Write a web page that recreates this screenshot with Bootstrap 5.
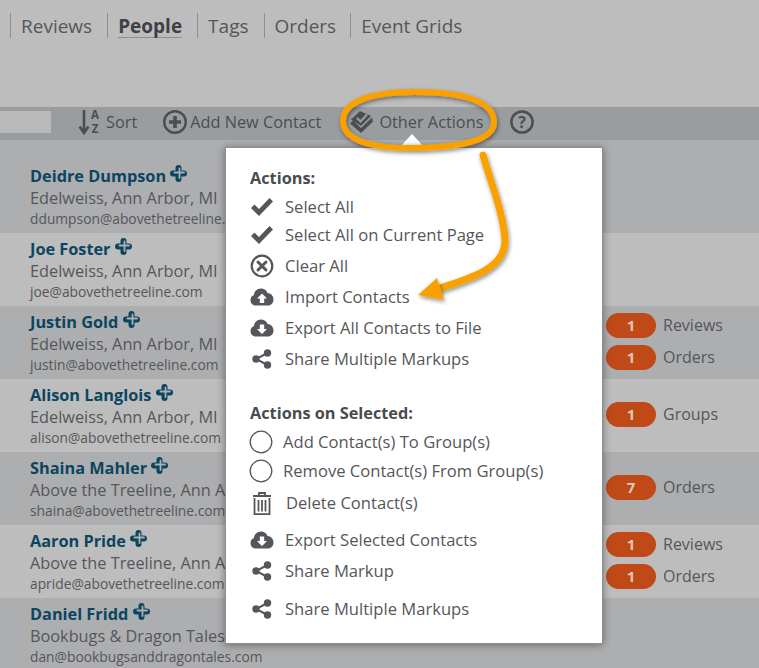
<!DOCTYPE html>
<html lang="en">
<head>
    <meta charset="UTF-8">
    <meta name="viewport" content="width=device-width, initial-scale=1.0">
    <title>People</title>
    <link href="https://cdn.jsdelivr.net/npm/bootstrap@5.3.2/dist/css/bootstrap.min.css" rel="stylesheet">
    <style>
        html, body { height: 668px; overflow: hidden; }
        body { font-family: "Open Sans", "Liberation Sans", sans-serif; background: #bdbdbd; color: #4f5052; position: relative; }
        .top-tabs { height: 107px; padding: 13px 0 0 10px; }
        .tab-link { height: 25px; border-left: 1px solid #8f8f8f; padding: 0 10px; font-size: 19px; line-height: 27px; color: #55565a; margin-right: 5px; }
        .tab-link.is-on { font-weight: 700; color: #3e4046; margin-right: 5px; }
        .tab-link.is-on span { display: inline-block; border-bottom: 1px solid #8f8f8f; line-height: 26px; height: 25px; }
        .tab-link.is-tight { margin-right: 4px; }
        .tool-bar { height: 33px; background: #9a9da0; font-size: 16.300px; color: #4c4d50; padding-bottom: 3px; }
        .search-stub { width: 51px; height: 22px; background: #b9b9b9; }
        .tool-item { line-height: 30px; }
        .tool-bar svg { display: block; }
        .lft-27 { margin-left: 27px; }
        .lft-26 { margin-left: 26px; }
        .lft-28 { margin-left: 28px; }
        .lft-3 { margin-left: 3px; }
        .lft-5 { margin-left: 5px; }
        .person-row { height: 73px; background: #bdbdbd; }
        .person-row.is-dark { background: #adaeb0; }
        .person-row.is-first { height: 93px; padding-top: 20px; }
        .who { width: 606px; padding: 4px 0 0 30px; white-space: nowrap; overflow: hidden; }
        .who-name { font-size: 16.300px; font-weight: 700; color: #0b4560; line-height: 24px; height: 24px; }
        .who-org { font-size: 16.300px; line-height: 22px; color: #55565a; margin-top: -1px; }
        .who-mail { font-size: 13.800px; line-height: 20px; color: #55565a; }
        .counts { padding-bottom: 3px; gap: 7px; }
        .count-line { height: 25px; font-size: 16px; color: #55565a; }
        .count-pill { width: 50px; height: 25px; border-radius: 13px; background: #bf4a17; color: #e0c8b8; font-weight: 700; font-size: 15px; line-height: 25px; text-align: center; margin-right: 7px; }
        .act-pop { position: absolute; left: 225px; top: 147px; width: 378px; height: 497px; background: #fff; border: 1px solid #8e8e8e; box-shadow: 0 1px 8px rgba(0,0,0,.4); padding: 19px 0 0 24px; color: #55565a; font-size: 16.600px; }
        .act-tip { position: absolute; left: 400px; top: 134px; width: 0; height: 0; border-left: 12px solid transparent; border-right: 12px solid transparent; border-bottom: 13px solid #fff; }
        .act-head { font-weight: 700; line-height: 22px; height: 22px; color: #4a4b4e; font-size: 16.300px; }
        .act-row { height: 22px; line-height: 22px; white-space: nowrap; }
        .act-ico { width: 35px; flex: none; }
        .act-ico svg { display: block; }
        .act-ico.is-ring { width: 34px; margin-left: -1px; }
        .act-ico.is-bin { width: 36px; padding-left: 3px; }
        .top-7 { margin-top: 7px; }
        .top-6 { margin-top: 6px; }
        .top-9 { margin-top: 9px; }
        .top-10 { margin-top: 10px; }
        .top-15 { margin-top: 15px; }
        .top-16 { margin-top: 16px; }
        .top-32 { margin-top: 32px; }
        .mark-up { position: absolute; left: 0; top: 0; pointer-events: none; }
    </style>
</head>
<body>
    <svg width="0" height="0" class="position-absolute">
        <defs>
            <symbol id="i-check" viewBox="0 0 24 20"><path d="M1 11 L4.500 7.500 L9 12 L19.500 1 L23 4.500 L9 19 Z" fill="currentColor"/></symbol>
            <symbol id="i-clear" viewBox="0 0 24 24"><circle cx="12" cy="12" r="10.300" fill="none" stroke="currentColor" stroke-width="2.200"/><path d="M8 8 L16 16 M16 8 L8 16" stroke="currentColor" stroke-width="3" stroke-linecap="round"/></symbol>
            <symbol id="i-up" viewBox="0 0 24 18"><path d="M6 17.500 C2.500 17.500 .5 15 .5 12 C.5 9.500 2 7.800 4 7 C4 3.500 7 .5 11 .5 C14 .5 16.500 2.200 17.500 5 C21 5 23.500 8 23.500 11.500 C23.500 15 21 17.500 18 17.500 Z" fill="currentColor"/><path d="M12 5.500 L17 10.500 L14.200 10.500 L14.200 15 L9.800 15 L9.800 10.500 L7 10.500 Z" fill="#fff"/></symbol>
            <symbol id="i-down" viewBox="0 0 24 18"><path d="M6 17.500 C2.500 17.500 .5 15 .5 12 C.5 9.500 2 7.800 4 7 C4 3.500 7 .5 11 .5 C14 .5 16.500 2.200 17.500 5 C21 5 23.500 8 23.500 11.500 C23.500 15 21 17.500 18 17.500 Z" fill="currentColor"/><path d="M12 15 L7 10 L9.800 10 L9.800 5.500 L14.200 5.500 L14.200 10 L17 10 Z" fill="#fff"/></symbol>
            <symbol id="i-share" viewBox="0 0 20 20"><circle cx="15.500" cy="4" r="3.700" fill="currentColor"/><circle cx="4" cy="10" r="3.700" fill="currentColor"/><circle cx="15.500" cy="16" r="3.700" fill="currentColor"/><path d="M15.500 4 L4 10 L15.500 16" fill="none" stroke="currentColor" stroke-width="2"/></symbol>
            <symbol id="i-bin" viewBox="0 0 18 23"><path d="M0 4 H18 M6 3.500 V1 H12 V3.500" fill="none" stroke="currentColor" stroke-width="1.800"/><path d="M1.500 6 V22.200 H16.500 V6" fill="none" stroke="currentColor" stroke-width="1.800"/><path d="M5.500 8 V19.500 M9 8 V19.500 M12.500 8 V19.500" stroke="currentColor" stroke-width="1.800"/></symbol>
            <symbol id="i-plus" viewBox="0 0 17 17"><path d="M8.500 8.500 V3 M8.500 8.500 V14 M8.500 8.500 H3 M8.500 8.500 H14" fill="none" stroke="#0b4560" stroke-width="6" stroke-linecap="round"/><path d="M9.500 3.500 V13 M4.500 7.500 H14" fill="none" stroke="#adaeb0" stroke-width="1.800" stroke-linecap="round"/></symbol>
        </defs>
    </svg>

    <div class="top-tabs d-flex align-items-start">
        <div class="tab-link">Reviews</div>
        <div class="tab-link is-on"><span>People</span></div>
        <div class="tab-link">Tags</div>
        <div class="tab-link is-tight">Orders</div>
        <div class="tab-link">Event Grids</div>
    </div>

    <div class="tool-bar d-flex align-items-center">
        <div class="search-stub"></div>
        <div class="tool-item d-flex align-items-center">
            <svg width="24" height="28" viewBox="0 0 24 28" class="lft-27 me-1"><path d="M6 2 V23 M1.500 18.500 L6 25 L10.500 18.500" fill="none" stroke="currentColor" stroke-width="2.600"/><text x="17" y="11" text-anchor="middle" font-size="11.500" font-weight="700" fill="currentColor" font-family="Open Sans">A</text><text x="17" y="25" text-anchor="middle" font-size="11.500" font-weight="700" fill="currentColor" font-family="Open Sans">Z</text></svg>
            <span>Sort</span>
        </div>
        <div class="tool-item d-flex align-items-center">
            <svg width="24" height="24" viewBox="0 0 24 24" class="lft-26"><circle cx="12" cy="12" r="10.800" fill="none" stroke="currentColor" stroke-width="2.400"/><path d="M12 6 V18 M6 12 H18" stroke="currentColor" stroke-width="3.600"/></svg>
            <span class="lft-3">Add New Contact</span>
        </div>
        <div class="tool-item d-flex align-items-center">
            <svg width="25" height="24" viewBox="0 0 25 24" class="lft-28"><path d="M1 13.500 L4 10.500 L12 18 L23 7.500 L24 11.500 L12 23 Z" fill="currentColor"/><path d="M2 9.500 L11 1 L22 6 L12 16 Z" fill="currentColor"/><path d="M8 8 L11.500 11.500 L18 4.500" fill="none" stroke="#9a9da0" stroke-width="2.200"/></svg>
            <span class="lft-5">Other Actions</span>
        </div>
        <svg width="24" height="24" viewBox="0 0 24 24" class="lft-27"><circle cx="12" cy="12" r="10.600" fill="none" stroke="currentColor" stroke-width="2.500"/><text x="12" y="18" text-anchor="middle" font-size="16" font-weight="700" fill="currentColor" font-family="Open Sans">?</text></svg>
    </div>

    <div>
        <div class="person-row is-dark is-first d-flex">
            <div class="who">
                <div class="who-name">Deidre Dumpson <svg width="17" height="17" class="align-text-top"><use href="#i-plus"/></svg></div>
                <div class="who-org">Edelweiss, Ann Arbor, MI</div>
                <div class="who-mail">ddumpson@abovethetreeline.com</div>
            </div>
        </div>
        <div class="person-row d-flex">
            <div class="who">
                <div class="who-name">Joe Foster <svg width="17" height="17" class="align-text-top"><use href="#i-plus"/></svg></div>
                <div class="who-org">Edelweiss, Ann Arbor, MI</div>
                <div class="who-mail">joe@abovethetreeline.com</div>
            </div>
        </div>
        <div class="person-row is-dark d-flex">
            <div class="who">
                <div class="who-name">Justin Gold <svg width="17" height="17" class="align-text-top"><use href="#i-plus"/></svg></div>
                <div class="who-org">Edelweiss, Ann Arbor, MI</div>
                <div class="who-mail">justin@abovethetreeline.com</div>
            </div>
            <div class="counts d-flex flex-column justify-content-center">
                <div class="count-line d-flex"><div class="count-pill">1</div>Reviews</div>
                <div class="count-line d-flex"><div class="count-pill">1</div>Orders</div>
            </div>
        </div>
        <div class="person-row d-flex">
            <div class="who">
                <div class="who-name">Alison Langlois <svg width="17" height="17" class="align-text-top"><use href="#i-plus"/></svg></div>
                <div class="who-org">Edelweiss, Ann Arbor, MI</div>
                <div class="who-mail">alison@abovethetreeline.com</div>
            </div>
            <div class="counts d-flex flex-column justify-content-center">
                <div class="count-line d-flex"><div class="count-pill">1</div>Groups</div>
            </div>
        </div>
        <div class="person-row is-dark d-flex">
            <div class="who">
                <div class="who-name">Shaina Mahler <svg width="17" height="17" class="align-text-top"><use href="#i-plus"/></svg></div>
                <div class="who-org">Above the Treeline, Ann Arbor, MI</div>
                <div class="who-mail">shaina@abovethetreeline.com</div>
            </div>
            <div class="counts d-flex flex-column justify-content-center">
                <div class="count-line d-flex"><div class="count-pill">7</div>Orders</div>
            </div>
        </div>
        <div class="person-row d-flex">
            <div class="who">
                <div class="who-name">Aaron Pride <svg width="17" height="17" class="align-text-top"><use href="#i-plus"/></svg></div>
                <div class="who-org">Above the Treeline, Ann Arbor, MI</div>
                <div class="who-mail">apride@abovethetreeline.com</div>
            </div>
            <div class="counts d-flex flex-column justify-content-center">
                <div class="count-line d-flex"><div class="count-pill">1</div>Reviews</div>
                <div class="count-line d-flex"><div class="count-pill">1</div>Orders</div>
            </div>
        </div>
        <div class="person-row is-dark d-flex">
            <div class="who">
                <div class="who-name">Daniel Fridd <svg width="17" height="17" class="align-text-top"><use href="#i-plus"/></svg></div>
                <div class="who-org">Bookbugs &amp; Dragon Tales, Ann Arbor, MI</div>
                <div class="who-mail">dan@bookbugsanddragontales.com</div>
            </div>
        </div>
    </div>

    <div class="act-tip"></div>
    <div class="act-pop">
        <div class="act-head">Actions:</div>
        <div class="act-row d-flex align-items-center top-7"><div class="act-ico"><svg width="24" height="20"><use href="#i-check"/></svg></div>Select All</div>
        <div class="act-row d-flex align-items-center top-6"><div class="act-ico"><svg width="24" height="20"><use href="#i-check"/></svg></div>Select All on Current Page</div>
        <div class="act-row d-flex align-items-center top-9"><div class="act-ico"><svg width="24" height="24"><use href="#i-clear"/></svg></div>Clear All</div>
        <div class="act-row d-flex align-items-center top-9"><div class="act-ico"><svg width="24" height="18"><use href="#i-up"/></svg></div>Import Contacts</div>
        <div class="act-row d-flex align-items-center top-9"><div class="act-ico"><svg width="24" height="18"><use href="#i-down"/></svg></div>Export All Contacts to File</div>
        <div class="act-row d-flex align-items-center top-9"><div class="act-ico"><svg width="24" height="20"><use href="#i-share"/></svg></div>Share Multiple Markups</div>
        <div class="act-head top-32">Actions on Selected:</div>
        <div class="act-row d-flex align-items-center top-7"><div class="act-ico is-ring"><svg width="24" height="24" viewBox="0 0 24 24"><circle cx="12" cy="12" r="10.800" fill="none" stroke="currentColor" stroke-width="1.300"/></svg></div>Add Contact(s) To Group(s)</div>
        <div class="act-row d-flex align-items-center top-7"><div class="act-ico is-ring"><svg width="24" height="24" viewBox="0 0 24 24"><circle cx="12" cy="12" r="10.800" fill="none" stroke="currentColor" stroke-width="1.300"/></svg></div>Remove Contact(s) From Group(s)</div>
        <div class="act-row d-flex align-items-center top-10"><div class="act-ico is-bin"><svg width="18" height="23"><use href="#i-bin"/></svg></div>Delete Contact(s)</div>
        <div class="act-row d-flex align-items-center top-15"><div class="act-ico"><svg width="24" height="18"><use href="#i-down"/></svg></div>Export Selected Contacts</div>
        <div class="act-row d-flex align-items-center top-9"><div class="act-ico"><svg width="24" height="20"><use href="#i-share"/></svg></div>Share Markup</div>
        <div class="act-row d-flex align-items-center top-16"><div class="act-ico"><svg width="24" height="20"><use href="#i-share"/></svg></div>Share Multiple Markups</div>
    </div>

    <svg class="mark-up" width="759" height="668" viewBox="0 0 759 668">
        <defs>
            <filter id="soft" x="-20%" y="-20%" width="140%" height="140%"><feDropShadow dx="1" dy="2" stdDeviation="2" flood-color="#000" flood-opacity=".45"/></filter>
        </defs>
        <g filter="url(#soft)" fill="none" stroke="#f9a100">
            <path stroke-width="6" d="M343 121 C343 102 370 92 415 92 C465 92 494 102 494 122 C494 140 462 148 410 148 C368 148 343 139 343 121 Z"/>
            <path stroke-width="7" d="M483 155 C490 180 504 215 505 240 C506 268 470 279 434 290" stroke-linecap="round"/>
        </g>
        <path d="M418 295 L437 278 L444 300 Z" fill="#f9a100" filter="url(#soft)"/>
    </svg>
</body>
</html>
